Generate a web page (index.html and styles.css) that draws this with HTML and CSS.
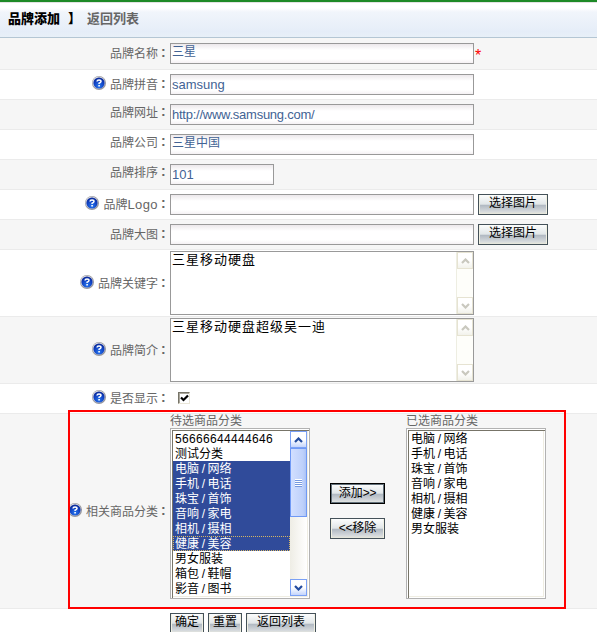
FILE: index.html
```html
<!DOCTYPE html>
<html lang="zh-CN">
<head>
<meta charset="utf-8">
<title>品牌添加</title>
<link rel="stylesheet" href="styles.css">
</head>
<body>
<svg class="defs" width="0" height="0">
  <defs>
    <radialGradient id="blue" cx=".5" cy=".75" r=".75"><stop offset="0" stop-color="#2878f0"/><stop offset=".6" stop-color="#1040c0"/><stop offset="1" stop-color="#0a2690"/></radialGradient>
    <symbol id="help" viewBox="0 0 14 14">
      <circle cx="7" cy="7" r="7" fill="#96969c"/>
      <circle cx="6.7" cy="6.6" r="6.2" fill="#dcdce2"/>
      <circle cx="7" cy="7" r="5.6" fill="url(#blue)"/>
      <path d="M5 5.5Q5.1 4 7 4Q9 4 9 5.5Q9 6.4 7.1 7.3V8" fill="none" stroke="#fff" stroke-width="1.5"/>
      <path d="M6.3 9h1.6v1.4H6.3z" fill="#fff"/>
    </symbol>
    <symbol id="up" viewBox="0 0 9 6"><path d="M1 5L4.5 1.5L8 5" fill="none" stroke="currentColor" stroke-width="2.2"/></symbol>
    <symbol id="down" viewBox="0 0 9 6"><path d="M1 1L4.5 4.5L8 1" fill="none" stroke="currentColor" stroke-width="2.2"/></symbol>
  </defs>
</svg>
<header class="bar"><b class="title">品牌添加</b><b class="mark">】</b><a class="back">返回列表</a></header>
<main class="form">
  <div class="row first"><div class="label">品牌名称<i>:</i></div><input class="text cjk" value="三星"><span class="req">*</span></div>
  <div class="row"><div class="label"><svg class="help"><use href="#help"/></svg>品牌拼音<i>:</i></div><input class="text" value="samsung"></div>
  <div class="row raised"><div class="label">品牌网址<i>:</i></div><input class="text url" value="http://www.samsung.com/"></div>
  <div class="row raised"><div class="label">品牌公司<i>:</i></div><input class="text cjk" value="三星中国"></div>
  <div class="row raised"><div class="label">品牌排序<i>:</i></div><input class="text short" value="101"></div>
  <div class="row"><div class="label"><svg class="help"><use href="#help"/></svg>品牌<span class="latin">Logo</span><i>:</i></div><input class="text"><button class="btn wide">选择图片</button></div>
  <div class="row"><div class="label">品牌大图<i>:</i></div><input class="text"><button class="btn wide">选择图片</button></div>
  <div class="row tall"><div class="label"><svg class="help"><use href="#help"/></svg>品牌关键字<i>:</i></div>
    <div class="area"><div class="area-text">三星移动硬盘</div><div class="track off"><span class="arrow"><svg><use href="#up"/></svg></span><span class="arrow"><svg><use href="#down"/></svg></span></div></div></div>
  <div class="row tall"><div class="label"><svg class="help"><use href="#help"/></svg>品牌简介<i>:</i></div>
    <div class="area"><div class="area-text">三星移动硬盘超级吴一迪</div><div class="track off"><span class="arrow"><svg><use href="#up"/></svg></span><span class="arrow"><svg><use href="#down"/></svg></span></div></div></div>
  <div class="row"><div class="label"><svg class="help"><use href="#help"/></svg>是否显示<i>:</i></div><span class="check"><svg viewBox="0 0 9 9"><path d="M1 3.5L3.5 6L8 1.5" fill="none" stroke="#000" stroke-width="2.2"/></svg></span></div>
  <div class="row picker"><div class="label"><svg class="help"><use href="#help"/></svg>相关商品分类<i>:</i></div>
    <div class="column"><div class="caption">待选商品分类</div>
      <div class="list"><ul>
        <li class="digits">56666644444646</li><li>测试分类</li><li class="sel">电脑 / 网络</li><li class="sel">手机 / 电话</li><li class="sel">珠宝 / 首饰</li><li class="sel">音响 / 家电</li><li class="sel">相机 / 摄相</li><li class="sel focus">健康 / 美容</li><li>男女服装</li><li>箱包 / 鞋帽</li><li>影音 / 图书</li>
      </ul><div class="track on"><span class="arrow"><svg><use href="#up"/></svg></span><span class="thumb"><span class="grip"></span></span><span class="arrow end"><svg><use href="#down"/></svg></span></div></div>
    </div>
    <div class="moves"><button class="btn default">添加<span class="chev">&gt;&gt;</span></button><button class="btn"><span class="chev">&lt;&lt;</span>移除</button></div>
    <div class="column"><div class="caption">已选商品分类</div>
      <div class="list"><ul>
        <li>电脑 / 网络</li><li>手机 / 电话</li><li>珠宝 / 首饰</li><li>音响 / 家电</li><li>相机 / 摄相</li><li>健康 / 美容</li><li>男女服装</li>
      </ul></div>
    </div>
  </div>
  <div class="actions"><button class="btn small">确定</button><button class="btn small">重置</button><button class="btn wide">返回列表</button></div>
  <div class="callout"></div>
</main>
</body>
</html>
```
FILE: styles.css
```css
* { box-sizing: border-box; }
body {
  margin: 0;
  height: 632px;
  overflow: hidden;
  background: #fff;
  color: #666;
  font: 12px/15px "Liberation Sans", "Noto Sans CJK SC", sans-serif;
}
.defs { position: absolute; }
.bar {
  height: 38px;
  display: flex;
  align-items: center;
  padding: 0 0 2px 8px;
  border-top: 2px solid #1d8a26;
  border-bottom: 1px solid #b4c6d4;
  background: linear-gradient(#d8ecd8 0, #fff 1px, #fff 6px, #f1f5fb 10px, #e5edf8 30px, #e8f0f8);
  box-shadow: inset 0 1px #e2e2e2;
  font-size: 13px;
  font-weight: bold;
}
.title, .mark { color: #000; }
.title { width: 60px; }
.mark { width: 19px; }
.form { position: relative; }
.row {
  height: 30px;
  display: flex;
  align-items: center;
  border-bottom: 1px solid #ebebeb;
}
.row:nth-child(odd) { background: #f6f6f6; }
.first { height: 32px; }
.tall { height: 67px; }
.label {
  width: 170px;
  flex: none;
  display: flex;
  align-items: center;
  justify-content: flex-end;
  padding-top: 2px;
}
.label i {
  width: 12px;
  font: bold 14px/15px "Liberation Sans", sans-serif;
  padding-left: 3px;
  margin-bottom: 4px;
}
.raised .label { padding: 0 0 2px; }
.latin { font-size: 13px; letter-spacing: .4px; margin-bottom: 2px; }
.help { width: 14px; height: 14px; margin: 0 4px 5px 0; }
.picker .help { margin-bottom: 6px; }
.text {
  width: 304px;
  height: 21px;
  margin: 0;
  padding: 0 1px;
  border: 1px solid #999;
  border-radius: 0;
  outline: 0;
  background: linear-gradient(#ece8eb, #fff 6px, #fff 15px, #f5f1f4);
  color: #426394;
  font: 13px/17px "Liberation Sans", "Noto Sans CJK SC", sans-serif;
}
.cjk { font-size: 12px; padding-bottom: 6px; }
.url { letter-spacing: -.25px; }
.first .text { margin-bottom: 1px; }
.short { width: 104px; }
.req { color: red; font-size: 16px; margin: 3px 0 0 1px; }
.btn {
  width: 55px;
  height: 21px;
  padding: 0 0 2px;
  border: 1px solid #445159;
  border-radius: 0;
  background: linear-gradient(#fcfdfd, #e1e6e8 48%, #b2bac3 55%, #d6dadd 88%, #e9e9dc);
  box-shadow: inset 1px 0 #f0f0e2, inset -1px 0 #f0f0e2;
  color: #000;
  font: 12px/15px "Liberation Sans", "Noto Sans CJK SC", sans-serif;
  white-space: nowrap;
}
.wide { width: 70px; }
.row .wide { margin-left: 4px; }
.small { width: 34px; }
.default { border-color: #000; box-shadow: inset 0 0 0 1px #63717b; }
.moves .btn { padding-bottom: 1px; }
.chev { letter-spacing: -.2px; }
.area {
  width: 304px;
  height: 64px;
  display: flex;
  justify-content: space-between;
  border: 1px solid #999;
  background: #fff;
}
.area-text { padding-left: 1px; color: #000; font-size: 13px; letter-spacing: 1px; }
.track { width: 17px; display: flex; flex-direction: column; justify-content: space-between; flex: none; }
.off { background: #fefefa; border-left: 1px solid #eeeee2; color: #c9c8be; }
.arrow { height: 17px; display: grid; place-items: center; border: 1px solid #e6e3d2; background: linear-gradient(#fff 50%, #f2f2eb); }
.arrow svg { width: 9px; height: 6px; }
.check { width: 12px; height: 12px; margin: 0 0 2px 8px; border: 1px solid; border-color: #777468 #e9e6d8 #e9e6d8 #777468; box-shadow: inset 1px 1px #aaa79c; background: #fff; }
.check svg { display: block; width: 9px; height: 9px; margin: 1px; }
.picker { height: 195px; align-items: flex-start; }
.picker > .label { height: 195px; }
.column { width: 140px; }
.caption { height: 14px; line-height: 14px; }
.list {
  height: 171px;
  display: flex;
  padding: 0 1px 1px 0;
  border: 1px solid #b2b2b2;
  background: #fff;
  box-shadow: inset 1px 1px #fff, inset 2px 2px #777468, inset -1px -1px #fff, inset -2px -2px #efede2;
}
ul { list-style: none; margin: 0; padding: 2px 0 0 2px; flex: 1; color: #000; word-spacing: -.7px; }
li { height: 15px; padding-left: 2px; line-height: 17px; }
.digits { letter-spacing: .33px; }
.sel { background: #304b9a; color: #fff; }
.focus { outline: 1px dotted #d5b564; outline-offset: -1px; }
.on { height: 165px; margin: 2px 1px 0 0; justify-content: flex-start; background: linear-gradient(90deg, #eeede5, #fff); color: #234c9f; }
.on .arrow { border-color: #7ba1f5; background: linear-gradient(#fff 50%, #c4d5fc); }
.thumb { height: 69px; display: grid; place-items: center; border: 1px solid #6f99f5; background: linear-gradient(90deg, #d2dfff, #bdd0fb 80%, #acc3f5); }
.grip { width: 7px; height: 8px; background: repeating-linear-gradient(#fff 0 1px, #7598df 1px 2px); }
.on .end { margin-top: auto; }
.moves { width: 96px; display: flex; flex-direction: column; gap: 14px; padding: 69px 0 0 20px; }
.actions { display: flex; gap: 4px; padding: 4px 0 0 170px; }
.callout { position: absolute; left: 68px; top: 372px; width: 498px; height: 199px; border: 2px solid #f00; }
```
